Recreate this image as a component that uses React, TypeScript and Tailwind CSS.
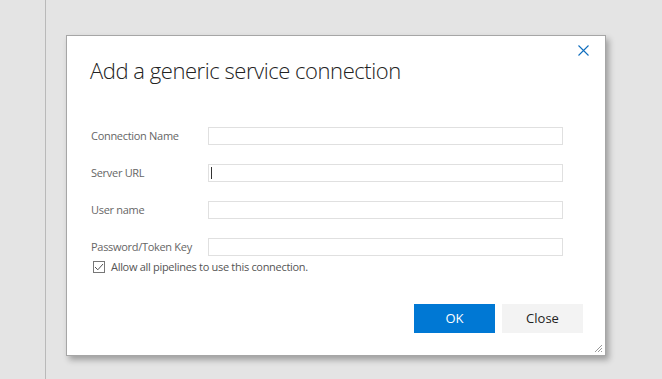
import React from 'react';

const fields = ['Connection Name', 'Server URL', 'User name', 'Password/Token Key'];

const App: React.FC = () => (
  <div className="flex w-[662px] h-[379px] bg-[#e4e4e4] overflow-hidden" style={{ fontFamily: '"Open Sans", "Noto Sans", sans-serif' }}>
    <div className="w-[46px] h-full border-r border-[#b9b9b9] shrink-0" />
    <div className="ml-[20px] mt-[35px]">
      <div className="relative w-[540px] h-[321px] bg-white border border-[#a6a6a6] shadow-[3px_4px_6px_rgba(0,0,0,0.3)] flex flex-col">
        <button className="absolute right-[15px] top-[7px] w-[14px] h-[14px] flex items-center justify-center text-[#106ebe]">
          <svg width="11" height="11" viewBox="0 0 11 11" fill="none" stroke="currentColor" strokeWidth="1.1">
            <path d="M0.5 0.5L10.5 10.5M10.5 0.5L0.5 10.5" />
          </svg>
        </button>
        <h1 className="ml-[23px] mt-[19px] text-[22px] font-light leading-[30px] text-[#222] tracking-[-0.45px]">
          Add a generic service connection
        </h1>
        <div className="mt-[42px] ml-[24px] flex flex-col gap-[19px]">
          {fields.map((f, i) => (
            <div key={f} className="flex items-center h-[18px]">
              <label className="w-[117px] text-[11px] text-[#666] tracking-[-0.3px]">{f}</label>
              <div className="w-[355px] h-[18px] border border-[#e0e0e0] flex items-center px-[2px]">
                {i === 1 && <div className="w-[1px] h-[12px] bg-[#333]" />}
              </div>
            </div>
          ))}
        </div>
        <div className="mt-[3px] ml-[26px] flex items-center gap-[6px]">
          <div className="w-[12px] h-[12px] border border-[#777] flex items-center justify-center">
            <svg width="10" height="8" viewBox="0 0 10 8" fill="none" stroke="#555" strokeWidth="1">
              <path d="M1 4L3.8 6.8L9 1" />
            </svg>
          </div>
          <span className="text-[11px] text-[#555] tracking-[-0.3px]">Allow all pipelines to use this connection.</span>
        </div>
        <div className="mt-auto mb-[22px] mr-[22px] flex justify-end gap-[7px]">
          <button className="w-[81px] h-[29px] bg-[#0078d4] text-white text-[13px]">OK</button>
          <button className="w-[81px] h-[29px] bg-[#f3f3f3] text-[#222] text-[13px]">Close</button>
        </div>
        <svg className="absolute right-[2px] bottom-[2px]" width="9" height="9" viewBox="0 0 9 9" stroke="#999" strokeWidth="1">
          <path d="M8 1L1 8M8 4L4 8M8 7L7 8" />
        </svg>
      </div>
    </div>
  </div>
);

export default App;
